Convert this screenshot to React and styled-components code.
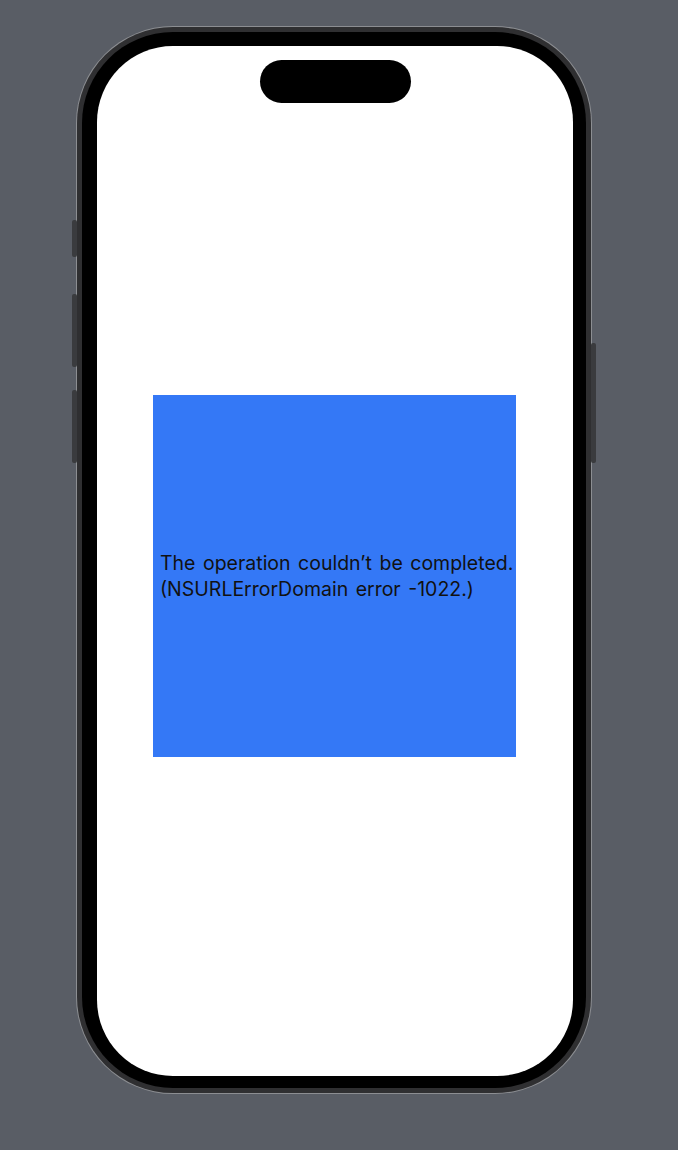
import React from 'react';
import styled, { createGlobalStyle } from 'styled-components';

const GlobalStyle = createGlobalStyle`
    html, body {
        margin: 0;
        padding: 0;
        background: #595d65;
    }
    body {
        font-family: Inter, "Liberation Sans", sans-serif;
    }
`;

const Stage = styled.div`
    width: 678px;
    height: 1150px;
    padding: 27px 0 0 77px;
    box-sizing: border-box;
`;

const Device = styled.div`
    position: relative;
    width: 514px;
    height: 1066px;
    box-sizing: border-box;
    border-radius: 96px;
    background: #2f2f31;
    box-shadow: 0 0 0 1px #8c8e92;
    padding: 5px;
`;

const Bezel = styled.div`
    width: 100%;
    height: 100%;
    box-sizing: border-box;
    border-radius: 91px;
    background: #000;
    padding: 14px 13px 12px 15px;
`;

const Screen = styled.div`
    width: 100%;
    height: 100%;
    box-sizing: border-box;
    border-radius: 76px;
    background: #fff;
    overflow: hidden;
    display: flex;
    flex-direction: column;
    align-items: center;
    padding-top: 14px;
`;

const Island = styled.div`
    flex: none;
    width: 151px;
    height: 43px;
    border-radius: 22px;
    background: #000;
`;

const Content = styled.main`
    flex: 1;
    align-self: stretch;
    display: flex;
    align-items: center;
    justify-content: center;
    padding: 7px 0 34px;
`;

// hardware buttons hang off the frame edge
const SideButton = styled.div`
    position: absolute;
    width: 5px;
    top: ${(p) => p.$top}px;
    height: ${(p) => p.$h}px;
    ${(p) => (p.$right ? 'right: -5px;' : 'left: -5px;')}
    background: #3a3b3e;
    border-radius: 2px;
`;

const ErrorBox = styled.div`
    width: 363px;
    height: 362px;
    margin-left: -1px;
    background: #3478f6;
    display: flex;
    align-items: center;
    padding: 0 7px;
    box-sizing: border-box;
`;

const ErrorText = styled.p`
    margin: 0;
    font-size: 19.5px;
    line-height: 26px;
    color: #111;
    white-space: nowrap;
    word-spacing: 2px;
`;

export default function App() {
    return (
        <>
            <GlobalStyle />
            <Stage>
                <Device>
                    <SideButton $top={193} $h={37} />
                    <SideButton $top={267} $h={73} />
                    <SideButton $top={363} $h={73} />
                    <SideButton $right $top={316} $h={120} />
                    <Bezel>
                        <Screen>
                            <Island />
                            <Content>
                                <ErrorBox>
                                    <ErrorText>
                                        The operation couldn’t be completed.
                                        <br />
                                        (NSURLErrorDomain error -1022.)
                                    </ErrorText>
                                </ErrorBox>
                            </Content>
                        </Screen>
                    </Bezel>
                </Device>
            </Stage>
        </>
    );
}
